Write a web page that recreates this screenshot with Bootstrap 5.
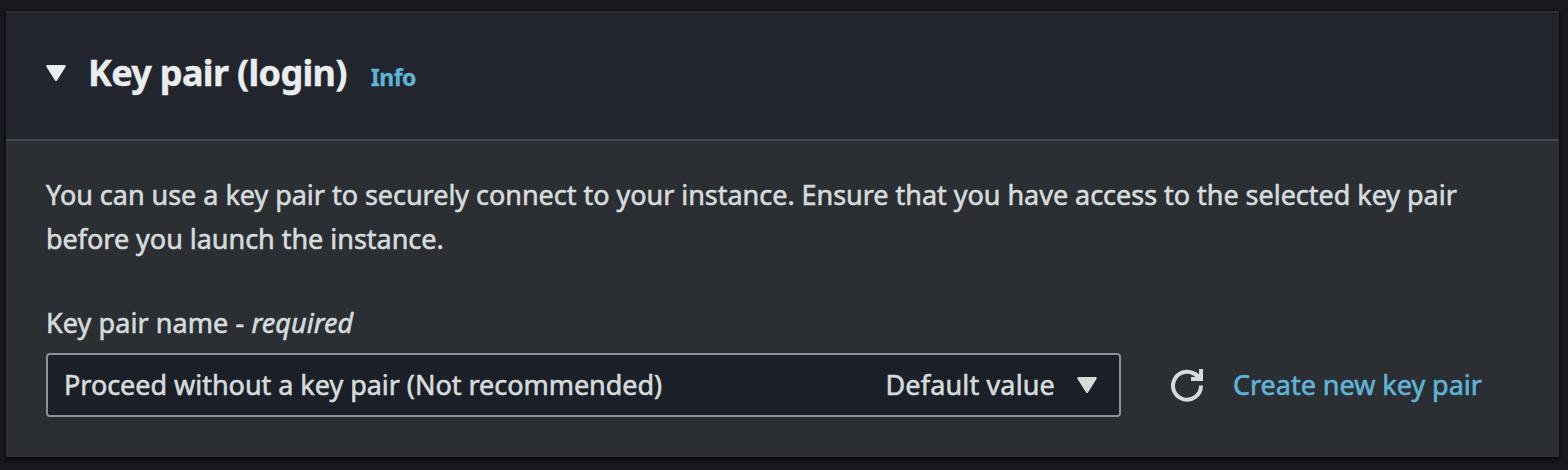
<!DOCTYPE html>
<html lang="en" data-bs-theme="dark">
<head>
<meta charset="utf-8">
<meta name="viewport" content="width=device-width, initial-scale=1">
<title>Key pair (login)</title>
<link href="https://cdn.jsdelivr.net/npm/bootstrap@5.3.0/dist/css/bootstrap.min.css" rel="stylesheet">
<style>
body{background:#18191e;color:#d5dbdb;font-family:"Noto Sans","Open Sans",sans-serif;font-size:27px;line-height:44px;height:470px;overflow:hidden;padding:11px 9px 0 6px}
.panel{height:446px;background:#2b2e33;border-top:2px solid #2c2f34;box-shadow:0 2px 4px 1px rgba(0,0,0,.65)}
.panel-head{height:128px;background:#22252d;border-bottom:2px solid #414750;padding:0 40px 2px}
.panel-head svg{margin-top:-4px}
.title{font-size:36px;font-weight:700;color:#eaeded;margin-left:22px;line-height:44px;letter-spacing:-.68px;-webkit-text-stroke:.4px currentColor}
.aws-link{color:#5fb4d6;text-decoration:none}
.info{font-size:23px;font-weight:700;margin-left:24px;letter-spacing:-.5px;-webkit-text-stroke:.3px currentColor}
.panel-content{padding:32px 40px 0}
.desc,.field-label,.select-box,.create{white-space:nowrap;letter-spacing:-.03px;-webkit-text-stroke:.6px currentColor}
.field-label{margin-top:40px;height:52px;letter-spacing:.08px}
.select-box{width:1075px;height:64px;background:#1a1f28;border:2px solid #879596;border-radius:4px;padding:0 22px 0 16px}
.default-tag{letter-spacing:.15px}
.select-box svg{margin-left:22px}
.refresh{margin-left:50px}
.create{margin-left:29px}
</style>
</head>
<body>
<section class="panel">
  <header class="panel-head d-flex align-items-center">
    <svg width="20" height="17" viewBox="0 0 20 17"><path d="M1.4 1.2H18.6L10 14.8Z" fill="#eaeded" stroke="#eaeded" stroke-width="2.4" stroke-linejoin="round"/></svg>
    <div class="d-flex align-items-baseline">
      <h2 class="title mb-0">Key pair (login)</h2>
      <a href="#" class="aws-link info">Info</a>
    </div>
  </header>
  <div class="panel-content">
    <p class="desc mb-0">You can use a key pair to securely connect to your instance. Ensure that you have access to the selected key pair<br>before you launch the instance.</p>
    <div class="field-label">Key pair name - <em>required</em></div>
    <div class="d-flex align-items-center">
      <div class="select-box d-flex align-items-center" role="button">
        <span>Proceed without a key pair (Not recommended)</span>
        <span class="ms-auto default-tag">Default value</span>
        <svg width="20" height="17" viewBox="0 0 20 17"><path d="M1.4 1.2H18.6L10 14.8Z" fill="#d5dbdb" stroke="#d5dbdb" stroke-width="2.4" stroke-linejoin="round"/></svg>
      </div>
      <svg class="refresh" width="33" height="33" viewBox="0 0 33 33" fill="none" stroke="#d5dbdb" stroke-width="4"><path d="M30 16.5A14 14 0 1 1 27 8"/><path d="M20 10H30V0"/><path d="M24 4.5L29 9.5"/></svg>
      <a href="#" class="aws-link create">Create new key pair</a>
    </div>
  </div>
</section>
<script src="https://cdn.jsdelivr.net/npm/bootstrap@5.3.0/dist/js/bootstrap.bundle.min.js"></script>
</body>
</html>
